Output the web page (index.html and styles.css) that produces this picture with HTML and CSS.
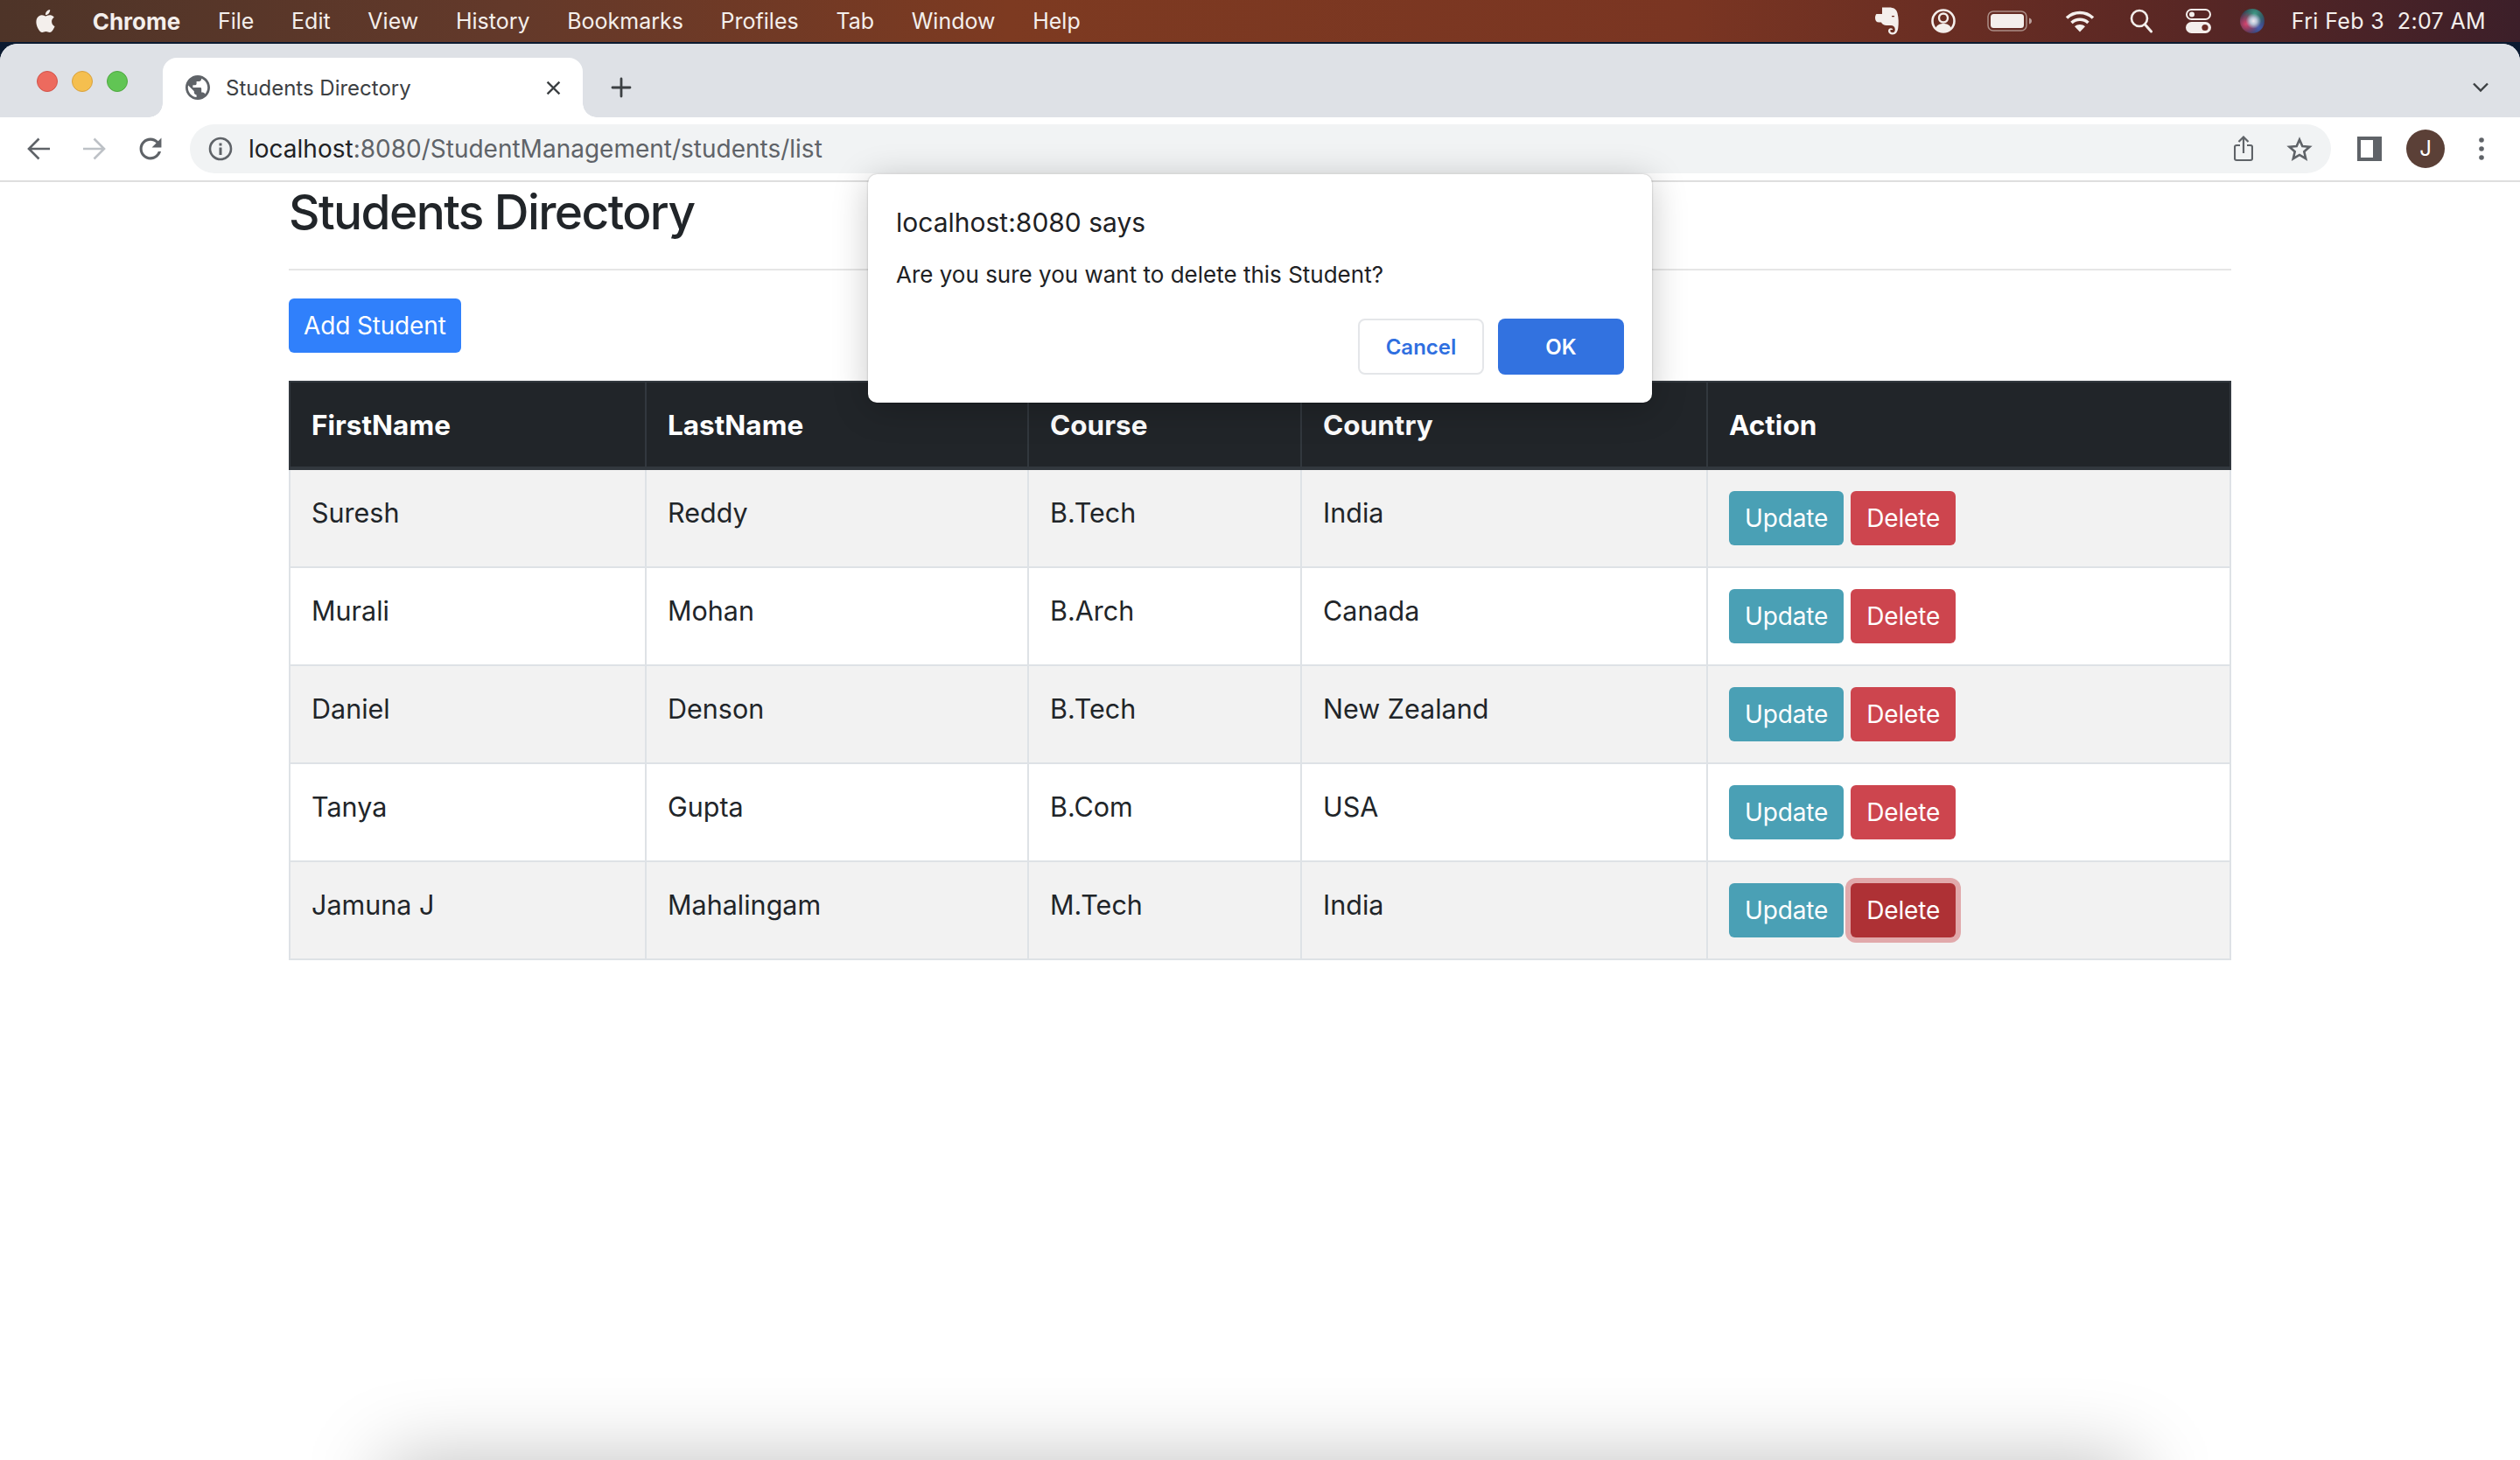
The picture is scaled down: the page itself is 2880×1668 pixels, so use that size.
FILE: index.html
```html
<!DOCTYPE html>
<html lang="en">
<head>
    <meta charset="UTF-8">
    <meta name="viewport" content="width=device-width, initial-scale=1.0">
    <title>Students Directory</title>
    <link rel="stylesheet" href="styles.css">
</head>
<body>
    <!-- macOS menu bar -->
    <div class="menubar">
        <svg class="apple" viewBox="0 0 24 24"><path fill="#f4efec" d="M12.152 6.896c-.948 0-2.415-1.078-3.96-1.04-2.04.027-3.91 1.183-4.961 3.014-2.117 3.675-.546 9.103 1.519 12.09 1.013 1.454 2.208 3.09 3.792 3.039 1.52-.065 2.09-.987 3.935-.987 1.831 0 2.35.987 3.96.948 1.637-.026 2.676-1.48 3.676-2.948 1.156-1.688 1.636-3.325 1.662-3.415-.039-.013-3.182-1.221-3.22-4.857-.026-3.04 2.48-4.494 2.597-4.559-1.429-2.09-3.623-2.324-4.39-2.376-2-.156-3.675 1.09-4.61 1.09zM15.53 3.83c.843-1.012 1.4-2.427 1.245-3.83-1.207.052-2.662.805-3.532 1.818-.78.896-1.454 2.338-1.273 3.714 1.338.104 2.715-.688 3.559-1.701"/></svg>
        <span class="menu-app">Chrome</span>
        <span>File</span>
        <span>Edit</span>
        <span>View</span>
        <span>History</span>
        <span>Bookmarks</span>
        <span>Profiles</span>
        <span>Tab</span>
        <span>Window</span>
        <span>Help</span>
        <div class="status">
            <svg class="st-evernote" viewBox="0 0 27 32"><path fill="#f4efec" d="M8 .5h8c5 0 8.500 2 9.500 6.500 1.500 6 1.500 11.500.8 17-.5 4.500-2.800 7.500-6.300 7.500-3 0-5-1.800-5-4 0-2 1.500-3.200 3-3.200 1.300 0 2.200.8 2.200 1.800h-1.800c-.7 0-1.100.4-1.100 1.200 0 1 1.100 2 2.700 2 1.800 0 2.800-1.500 2.800-3.500 0-3-2-4.800-5-4.800H13c-3 0-5-1.500-6-3.500H4.500C1.500 17.500 0 15.500 0 12.500 0 10.500.5 9 1.500 8H8z"/><path fill="#6b2c22" d="M2 6.800 7 1.500v5.300zM19 10h3v1.200h-3z"/></svg>
            <svg class="st-user" viewBox="0 0 28 28"><circle cx="14" cy="14" r="12.500" fill="none" stroke="#f4efec" stroke-width="2.600"/><circle cx="14" cy="10.500" r="5" fill="none" stroke="#f4efec" stroke-width="2.400"/><path fill="#f4efec" d="M5 22c2-4 5.500-5 9-5s7 1 9 5c-2.500 2.500-5.500 4-9 4s-6.500-1.500-9-4z"/></svg>
            <svg class="st-battery" viewBox="0 0 51 24"><rect x="1" y="1" width="44" height="22" rx="6" fill="none" stroke="#f4efec" stroke-opacity=".5" stroke-width="1.500"/><rect x="4" y="4" width="38" height="16" rx="3.500" fill="#f4efec"/><path fill="#f4efec" fill-opacity=".6" d="M48 8.500c1.800.6 3 1.800 3 3.500s-1.200 2.900-3 3.500z"/></svg>
            <svg class="st-wifi" viewBox="0 0 34 26"><path fill="none" stroke="#f4efec" stroke-width="3.600" d="M2 9.500c8.500-8 21.500-8 30 0M7.500 15c5.500-5 13.500-5 19 0"/><path fill="#f4efec" d="M17 25.500l-6-6.300c3.400-2.800 8.600-2.800 12 0z"/></svg>
            <svg class="st-search" viewBox="0 0 26 28"><circle cx="11" cy="11" r="9" fill="none" stroke="#f4efec" stroke-width="2.600"/><path stroke="#f4efec" stroke-width="3" stroke-linecap="round" d="M17.500 18l7 8"/></svg>
            <svg class="st-control" viewBox="0 0 29 28"><rect x="1" y="1" width="27" height="11" rx="5.500" fill="none" stroke="#f4efec" stroke-width="2"/><circle cx="7" cy="6.500" r="3" fill="#f4efec"/><rect y="15" width="29" height="13" rx="6.500" fill="#f4efec"/><circle cx="22" cy="21.500" r="3.600" fill="#6a2c25"/></svg>
            <div class="siri"></div>
            <span class="clock">Fri Feb 3&nbsp; 2:07 AM</span>
        </div>
    </div>

    <div class="window">
        <!-- Tab strip -->
        <div class="tabstrip">
            <div class="lights">
                <span class="light light-red"></span>
                <span class="light light-yellow"></span>
                <span class="light light-green"></span>
            </div>
            <div class="tab">
                <svg class="globe" viewBox="2 2 20 20"><path fill="#5f6368" d="M12 2C6.480 2 2 6.480 2 12s4.480 10 10 10 10-4.480 10-10S17.520 2 12 2zm-1 17.930c-3.950-.49-7-3.850-7-7.930 0-.62.08-1.210.21-1.790L9 15v1c0 1.100.9 2 2 2v1.930zm6.900-2.540c-.26-.81-1-1.390-1.900-1.390h-1v-3c0-.55-.45-1-1-1H8v-2h2c.55 0 1-.45 1-1V7h2c1.100 0 2-.9 2-2v-.41c2.930 1.190 5 4.060 5 7.410 0 2.080-.8 3.970-2.100 5.390z"/></svg>
                <span class="tab-title">Students Directory</span>
                <svg class="tab-close" viewBox="0 0 16 16"><path stroke="#3c4043" stroke-width="2.200" d="M1.500 1.500l13 13M14.500 1.500l-13 13"/></svg>
            </div>
            <svg class="new-tab" viewBox="0 0 24 24"><path stroke="#3c4043" stroke-width="2.800" stroke-linecap="round" d="M12 2v20M2 12h20"/></svg>
            <svg class="tab-list" viewBox="0 0 18 12"><path fill="none" stroke="#3c4043" stroke-width="2.400" d="M1 1.500l8 8 8-8"/></svg>
        </div>

        <!-- Toolbar -->
        <div class="toolbar">
            <div class="tool">
                <svg class="tool-icon" viewBox="0 0 28 28"><path fill="none" stroke="#5f6368" stroke-width="2.600" d="M27 14H3M14.500 2.500 3 14l11.500 11.500"/></svg>
            </div>
            <div class="tool">
                <svg class="tool-icon" viewBox="0 0 28 28"><path fill="none" stroke="#bdc1c6" stroke-width="2.600" d="M1 14h24M13.500 2.500 25 14 13.500 25.500"/></svg>
            </div>
            <div class="tool">
                <svg class="tool-reload" viewBox="3 3 18 18"><path fill="#5f6368" d="M17.650 6.350C16.200 4.900 14.210 4 12 4c-4.420 0-7.990 3.580-7.990 8s3.570 8 7.990 8c3.730 0 6.840-2.550 7.730-6h-2.080c-.82 2.330-3.040 4-5.650 4-3.310 0-6-2.690-6-6s2.690-6 6-6c1.660 0 3.140.69 4.220 1.780L13 11h7V4l-2.350 2.350z"/></svg>
            </div>
            <div class="omnibox">
                <svg class="info" viewBox="0 0 28 28"><circle cx="14" cy="14" r="12" fill="none" stroke="#5f6368" stroke-width="2.600"/><path fill="#5f6368" d="M12.500 12.500h3V21h-3zM12.500 7.500h3v3h-3z"/></svg>
                <span class="url"><span class="url-host">localhost</span>:8080/StudentManagement/students/list</span>
                <svg class="share" viewBox="0 0 22 30"><path fill="none" stroke="#5f6368" stroke-width="2.200" d="M7 11H3a2 2 0 0 0-2 2v13a2 2 0 0 0 2 2h16a2 2 0 0 0 2-2V13a2 2 0 0 0-2-2h-4M11 20V2M5.500 7 11 1.500 16.500 7"/></svg>
                <svg class="star" viewBox="0 0 30 28"><path fill="none" stroke="#5f6368" stroke-width="2.600" d="M15 3.500l3.300 7.600 8.200.7-6.200 5.400 1.900 8-7.200-4.300-7.200 4.300 1.900-8-6.200-5.400 8.200-.7z"/></svg>
            </div>
            <div class="tool">
                <div class="side-panel"></div>
            </div>
            <div class="tool">
                <div class="avatar">J</div>
            </div>
            <div class="tool">
                <svg class="dots" viewBox="0 0 6 26"><circle cx="3" cy="3" r="2.800" fill="#5f6368"/><circle cx="3" cy="13" r="2.800" fill="#5f6368"/><circle cx="3" cy="23" r="2.800" fill="#5f6368"/></svg>
            </div>
        </div>

        <!-- Page -->
        <div class="page">
            <h1>Students Directory</h1>
            <hr class="rule">
            <a class="btn btn-add" href="#">Add Student</a>
            <table class="students">
                <colgroup>
                    <col class="col-first">
                    <col class="col-last">
                    <col class="col-course">
                    <col class="col-country">
                    <col>
                </colgroup>
                <thead>
                    <tr>
                        <th>FirstName</th>
                        <th>LastName</th>
                        <th>Course</th>
                        <th>Country</th>
                        <th>Action</th>
                    </tr>
                </thead>
                <tbody>
                    <tr>
                        <td>Suresh</td>
                        <td>Reddy</td>
                        <td>B.Tech</td>
                        <td>India</td>
                        <td><div class="actions"><a class="btn btn-update" href="#">Update</a><a class="btn btn-delete" href="#">Delete</a></div></td>
                    </tr>
                    <tr>
                        <td>Murali</td>
                        <td>Mohan</td>
                        <td>B.Arch</td>
                        <td>Canada</td>
                        <td><div class="actions"><a class="btn btn-update" href="#">Update</a><a class="btn btn-delete" href="#">Delete</a></div></td>
                    </tr>
                    <tr>
                        <td>Daniel</td>
                        <td>Denson</td>
                        <td>B.Tech</td>
                        <td>New Zealand</td>
                        <td><div class="actions"><a class="btn btn-update" href="#">Update</a><a class="btn btn-delete" href="#">Delete</a></div></td>
                    </tr>
                    <tr>
                        <td>Tanya</td>
                        <td>Gupta</td>
                        <td>B.Com</td>
                        <td>USA</td>
                        <td><div class="actions"><a class="btn btn-update" href="#">Update</a><a class="btn btn-delete" href="#">Delete</a></div></td>
                    </tr>
                    <tr>
                        <td>Jamuna J</td>
                        <td>Mahalingam</td>
                        <td>M.Tech</td>
                        <td>India</td>
                        <td><div class="actions"><a class="btn btn-update" href="#">Update</a><a class="btn btn-delete btn-focus" href="#">Delete</a></div></td>
                    </tr>
                </tbody>
            </table>
        </div>
    </div>

    <!-- Chrome confirm dialog -->
    <div class="dialog">
        <div class="dialog-title">localhost:8080 says</div>
        <div class="dialog-text">Are you sure you want to delete this Student?</div>
        <div class="dialog-buttons">
            <button class="dialog-cancel">Cancel</button>
            <button class="dialog-ok">OK</button>
        </div>
    </div>

    <!-- Shadow coming up from under the bottom edge -->
    <div class="bottom-shadow"></div>
</body>
</html>
```

FILE: styles.css
```css
html, body {
    height: 100%;
    overflow: hidden;
}
body {
    margin: 0;
    font-family: "Inter", "Liberation Sans", sans-serif;
    background-color: #0b1a30;
    color: #212529;
}

/* Menu bar */
.menubar {
    display: flex;
    align-items: center;
    gap: 42.700px;
    height: 48px;
    padding-left: 39px;
    font-size: 25px;
    color: #f4efec;
    background: linear-gradient(90deg, #4e3428 0%, #63392a 20%, #7d3a21 40%, #7a3522 67%, #5c2824 85%, #3c1f29 100%);
}
.apple {
    width: 26px;
    height: 32px;
    margin-right: -2px;
}
.menu-app {
    font-size: 26px;
    font-weight: 700;
}
.status {
    display: flex;
    align-items: center;
    margin-left: auto;
    padding-right: 39px;
}
.st-evernote {
    width: 27px;
    height: 32px;
}
.st-user {
    width: 28px;
    height: 28px;
    margin-left: 37px;
}
.st-battery {
    width: 51px;
    height: 24px;
    margin-left: 36px;
}
.st-wifi {
    width: 34px;
    height: 26px;
    margin-left: 38px;
}
.st-search {
    width: 26px;
    height: 28px;
    margin-left: 40px;
}
.st-control {
    width: 29px;
    height: 28px;
    margin-left: 38px;
}
.siri {
    width: 28px;
    height: 28px;
    margin-left: 33px;
    border-radius: 50%;
    background:
        radial-gradient(circle at 55% 50%, #f1e9ee 0, #b9c6d8 18%, transparent 42%),
        radial-gradient(circle at 25% 62%, #d5456f 0, transparent 52%),
        radial-gradient(circle at 60% 20%, #3f9a86 0, transparent 55%),
        radial-gradient(circle at 75% 75%, #4a5fb0 0, transparent 50%),
        #2a2f45;
}
.clock {
    margin-left: 31px;
    letter-spacing: 0.35px;
}

/* Browser window */
.window {
    display: flex;
    flex-direction: column;
    height: calc(100% - 50px);
    margin-top: 2px;
    border-radius: 20px 20px 0 0;
    background-color: #ffffff;
    overflow: hidden;
}
.tabstrip {
    display: flex;
    align-items: center;
    flex-shrink: 0;
    height: 84px;
    background-color: #dee1e6;
}
.lights {
    display: flex;
    align-self: flex-start;
    gap: 16px;
    margin: 0 40px 0 42px;
    padding-top: 31px;
}
.light {
    width: 24px;
    height: 24px;
    box-sizing: border-box;
    border-radius: 50%;
    border: 1px solid;
}
.light-red {
    background-color: #ed6a5e;
    border-color: #d1544a;
}
.light-yellow {
    background-color: #f5bf4f;
    border-color: #d8a13e;
}
.light-green {
    background-color: #61c554;
    border-color: #4ea73f;
}
.tab {
    position: relative;
    display: flex;
    align-items: center;
    align-self: flex-end;
    box-sizing: border-box;
    width: 480px;
    height: 68px;
    padding: 0 25px 0 26px;
    border-radius: 16px 16px 0 0;
    background-color: #ffffff;
    font-size: 24px;
    color: #3c4043;
}
.tab::before,
.tab::after {
    content: "";
    position: absolute;
    bottom: 0;
    width: 16px;
    height: 16px;
}
.tab::before {
    left: -16px;
    background: radial-gradient(circle at 0 0, #dee1e6 15.500px, #ffffff 16px);
}
.tab::after {
    right: -16px;
    background: radial-gradient(circle at 100% 0, #dee1e6 15.500px, #ffffff 16px);
}
.globe {
    width: 28px;
    height: 28px;
    margin-right: 18px;
}
.tab-title {
    flex: 1;
}
.tab-close {
    width: 17px;
    height: 17px;
}
.new-tab {
    width: 24px;
    height: 24px;
    margin-left: 32px;
    margin-top: 16px;
}
.tab-list {
    width: 18px;
    height: 12px;
    margin: 16px 36px 0 auto;
}

/* Toolbar */
.toolbar {
    display: flex;
    align-items: center;
    flex-shrink: 0;
    gap: 8px;
    box-sizing: border-box;
    height: 74px;
    padding: 0 16px;
    border-bottom: 2px solid #dedede;
}
.tool {
    display: flex;
    align-items: center;
    justify-content: center;
    width: 56px;
    height: 56px;
}
.tool-icon {
    width: 28px;
    height: 28px;
}
.tool-reload {
    width: 28px;
    height: 28px;
}
.omnibox {
    display: flex;
    align-items: center;
    flex: 1;
    height: 56px;
    margin: 0 8px 0 9px;
    padding: 0 21px 0 21px;
    border-radius: 28px;
    background-color: #f1f3f4;
}
.info {
    width: 28px;
    height: 28px;
    margin-right: 18px;
}
.url {
    flex: 1;
    font-size: 28px;
    color: #5f6368;
}
.url-host {
    color: #202124;
}
.share {
    width: 22px;
    height: 30px;
    margin-right: 38px;
}
.star {
    width: 30px;
    height: 28px;
}
.side-panel {
    box-sizing: border-box;
    width: 28px;
    height: 28px;
    border: 4px solid #5f6368;
    border-right-width: 10px;
    background-color: #ffffff;
}
.avatar {
    width: 44px;
    height: 44px;
    border-radius: 50%;
    background-color: #5b4037;
    color: #ffffff;
    font-size: 24px;
    line-height: 44px;
    text-align: center;
}
.dots {
    width: 6px;
    height: 26px;
}

/* Page content */
.page {
    flex: 1;
    padding: 1px 330px 0 330px;
}
h1 {
    margin: 0;
    font-size: 55px;
    font-weight: 530;
    line-height: 66px;
    letter-spacing: -1.600px;
    color: #212529;
}
.rule {
    margin: 32px 0;
    border: 0;
    border-top: 2px solid #e6e6e6;
}
.btn {
    display: inline-block;
    box-sizing: border-box;
    height: 62px;
    padding: 0 18px;
    border-radius: 6px;
    color: #ffffff;
    font-size: 28px;
    line-height: 62px;
    letter-spacing: -0.15px;
    text-decoration: none;
}
.btn-add {
    padding: 0 17px;
    background-color: #3080fb;
    margin-bottom: 32px;
    vertical-align: top;
}
.students {
    width: 2220px;
    border-collapse: collapse;
    table-layout: fixed;
    font-size: 30.500px;
    line-height: 45px;
}
.col-first {
    width: 407px;
}
.col-last {
    width: 437px;
}
.col-course {
    width: 312px;
}
.col-country {
    width: 464px;
}
.students th {
    height: 99px;
    padding: 0 24px;
    box-sizing: border-box;
    border: 2px solid #32383e;
    border-bottom-width: 4px;
    background-color: #212529;
    color: #ffffff;
    font-size: 31.500px;
    font-weight: 700;
    text-align: left;
}
.students td {
    height: 112px;
    padding: 26px 24px 24px 24px;
    box-sizing: border-box;
    border: 2px solid #dee2e6;
    vertical-align: top;
}
.students td:last-child {
    padding-top: 24px;
}
.students tbody tr:nth-child(odd) {
    background-color: #f2f2f2;
}
.actions {
    display: flex;
    gap: 8px;
}
.btn-update {
    background-color: #4aa0b5;
}
.btn-delete {
    background-color: #cd454e;
}
.btn-focus {
    background-color: #ae3135;
    box-shadow: 0 0 0 6px #e1a9ab;
}

/* Confirm dialog */
.dialog {
    position: absolute;
    top: 199px;
    left: 992px;
    box-sizing: border-box;
    width: 896px;
    height: 261px;
    padding: 37px 32px 0 32px;
    border-radius: 10px;
    background-color: #ffffff;
    box-shadow: 0 0 2px rgba(0, 0, 0, 0.3), 0 6px 40px rgba(0, 0, 0, 0.22);
}
.dialog-title {
    font-size: 30px;
    line-height: 36px;
    color: #202124;
}
.dialog-text {
    margin-top: 25px;
    font-size: 26px;
    line-height: 34px;
    color: #202124;
}
.dialog-buttons {
    display: flex;
    justify-content: flex-end;
    gap: 16px;
    margin-top: 33px;
}
.dialog-cancel,
.dialog-ok {
    box-sizing: border-box;
    height: 64px;
    border-radius: 8px;
    font-family: inherit;
    font-size: 24px;
    font-weight: 600;
}
.dialog-cancel {
    width: 144px;
    border: 2px solid #e4e6e9;
    background-color: #ffffff;
    color: #2f6fe0;
}
.dialog-ok {
    width: 144px;
    border: 0;
    background-color: #3272e0;
    color: #ffffff;
}

.bottom-shadow {
    position: fixed;
    left: 440px;
    right: 440px;
    bottom: -100px;
    height: 100px;
    box-shadow: 0 0 90px rgba(0, 0, 0, 0.25);
}
```
